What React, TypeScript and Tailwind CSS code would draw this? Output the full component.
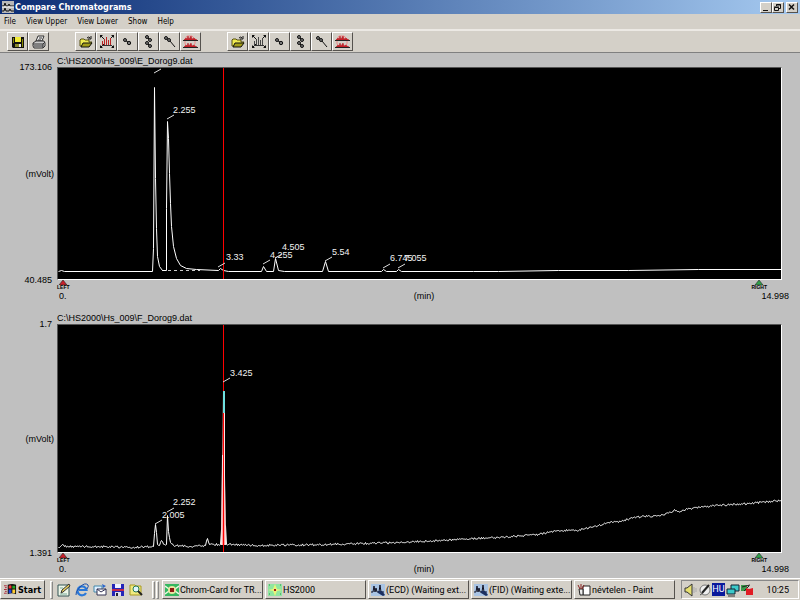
import React from 'react';

type Point = [number, number];

interface Peak {
  label?: string;
  // label anchor
  x: number;
  y: number;
  // start of the leader line
  from: Point;
}

interface ChromatogramProps {
  file: string;
  max: string;
  min: string;
  height: number;
  peaks: Peak[];
  children: React.ReactNode;
}

const RAISED =
  'border border-t-white border-l-white border-r-[#55524e] border-b-[#55524e] bg-[#d4d0c8]';
const UI_FONT = "font-['DejaVu_Sans_Condensed','DejaVu_Sans',sans-serif]";
const TASK_FONT = "font-[Roboto,'Liberation_Sans',sans-serif]";
const CHART_FONT = "font-['Liberation_Sans',Arial,sans-serif]";

const toPoints = (points: Point[]) => points.map((p) => p.join(',')).join(' ');

const upperTrace: Point[] = [
  [0, 203], [3, 202], [6, 203], [94, 203], [95, 180], [96, 19], [97, 110], [98, 160],
  [99, 188], [101, 198], [104, 202], [108, 202], [108, 140], [109, 53], [110, 70], [111, 105],
  [112, 135], [113, 158], [115, 178], [118, 190], [122, 197], [128, 200], [138, 201], [160, 202],
  [162, 200], [165, 202], [170, 203], [203, 203], [205, 198], [208, 203], [215, 203], [217, 190],
  [220, 202], [226, 203], [264, 203], [267, 193], [270, 203], [323, 203], [325, 201], [328, 203],
  [338, 203], [340, 201], [343, 203], [415, 203], [440, 203], [500, 202], [570, 202], [640, 201],
  [723, 201],
];

const lowerBase: Point[] = [
  [0, 222], [2, 221], [4, 219], [6, 221], [40, 221], [70, 222], [95, 221], [96, 208], [97, 199],
  [98, 207], [99, 219], [101, 220], [103, 215], [106, 219], [108, 219], [109, 190], [110, 206],
  [112, 217], [115, 220], [132, 221], [147, 220], [149, 213], [151, 219], [162, 219], [163, 204],
];

const lowerTail: Point[] = [
  [167, 200], [168, 219], [174, 219], [200, 220], [270, 219], [340, 217], [400, 214], [440, 212],
  [480, 209], [500, 205], [518, 205], [540, 200], [553, 196], [562, 196], [575, 192], [600, 190],
  [613, 187], [616, 184], [620, 186], [632, 183], [660, 180], [690, 178], [723, 175],
];

// Adds a small detector noise between the given points
const withNoise = (points: Point[], amplitude: number): Point[] => {
  let seed = 17;
  const rand = () => {
    seed = (seed * 1103515245 + 12345) % 2147483648;
    return seed / 2147483648 - 0.5;
  };
  const out: Point[] = [];
  for (let i = 0; i < points.length - 1; i++) {
    const [x0, y0] = points[i];
    const [x1, y1] = points[i + 1];
    out.push(points[i]);
    for (let x = x0 + 1; x < x1; x++) {
      const y = y0 + ((y1 - y0) * (x - x0)) / (x1 - x0);
      out.push([x, Math.round((y + rand() * amplitude) * 10) / 10]);
    }
  }
  out.push(points[points.length - 1]);
  return out;
};

const upperPeaks: Peak[] = [
  { x: 103, y: 6, from: [96, 5] },
  { label: '2.255', x: 115, y: 45, from: [109, 51] },
  { label: '3.33', x: 168, y: 192, from: [160, 199] },
  { label: '4.255', x: 212, y: 190, from: [205, 196] },
  { label: '4.505', x: 224, y: 182, from: [217, 190] },
  { label: '5.54', x: 274, y: 187, from: [267, 193] },
  { label: '6.745', x: 332, y: 193, from: [325, 200] },
  { label: '7.055', x: 346, y: 193, from: [340, 200] },
];

const lowerPeaks: Peak[] = [
  { label: '2.005', x: 104, y: 193, from: [97, 199] },
  { label: '2.252', x: 115, y: 180, from: [109, 187] },
  { label: '3.425', x: 172, y: 51, from: [165, 57] },
];

/* ---------- Icons ---------- */

const SaveIcon = () => (
  <svg className="w-4 h-4" viewBox="0 0 16 16">
    <path d="M2 3h12v11H3l-1-1z" fill="#111" />
    <path d="M3 4h1v5H3zM12 5h1v8h-1z" fill="#8a8a00" />
    <path d="M5 3h6v5H5z" fill="#f2ec3a" />
    <path d="M5 10h6v3H5z" fill="#8a8a2a" />
    <path d="M9 10h2v3H9z" fill="#e8e8e8" />
  </svg>
);

const PrintIcon = () => (
  <svg className="w-4 h-4" viewBox="0 0 16 16" stroke="#333" fill="#ccc">
    <path d="M5 7l2-5h6l-2 5z" fill="#eee" />
    <path d="M8 4h3M7 6h3" />
    <path d="M2 9l3-2h8l1 2v3l-2 2H3l-1-2z" />
    <path d="M2 10h10l2-2M3 12h9M12 10v4" fill="none" />
  </svg>
);

const OpenIcon = () => (
  <svg className="w-4 h-4" viewBox="0 0 16 16">
    <path d="M2 12V6l1-1h3l1 1h4v2h3l-3 4z" fill="#f0ea50" stroke="#554f10" />
    <path d="M3 13l2-4h9l-3 4z" fill="#a39c18" stroke="#111" />
    <path d="M9 4q2-2 3 0M13 2v3h-3" fill="none" stroke="#111" />
  </svg>
);

const FullScaleIcon = ({ color }: { color: string }) => (
  <svg className="w-4 h-4" viewBox="0 0 16 16" fill="none">
    <path d="M1 1h3L1 4zM15 1h-3l3 3zM1 14h3l-3-3zM15 14h-3l3-3z" fill="#111" />
    <path d="M2 2l3 3M14 2l-3 3M2 13l3-3M14 13l-3-3" stroke="#111" />
    <path d="M3.500 11V7M5.500 11V5M7.500 11V3M9.500 11V6M11.500 11V4" stroke={color} />
    <path d="M3 11.500h10" stroke="#333" />
  </svg>
);

const DotsIcon = () => (
  <svg className="w-4 h-4" viewBox="0 0 16 16" stroke="#111" fill="#777">
    <circle cx="5" cy="6" r="1.500" />
    <circle cx="9" cy="9" r="1.700" />
    <path d="M6 7l2 1" />
  </svg>
);

const ManyDotsIcon = () => (
  <svg className="w-4 h-4" viewBox="0 0 16 16" stroke="#111" fill="#777">
    <circle cx="6" cy="3" r="1.500" />
    <circle cx="9" cy="6" r="1.500" />
    <circle cx="6" cy="9" r="1.500" />
    <circle cx="9" cy="12" r="1.500" />
    <path d="M7 4l1 1M7 10l1 1" />
  </svg>
);

const ProbeIcon = () => (
  <svg className="w-4 h-4" viewBox="0 0 16 16" stroke="#111" fill="#777">
    <circle cx="4" cy="4" r="1.500" />
    <circle cx="7" cy="6" r="1.500" />
    <path d="M8 7l5 6" />
  </svg>
);

const CompareIcon = () => (
  <svg className="w-4 h-4" viewBox="0 0 16 16" fill="none">
    <path d="M4 2h5l3 3v5l-3 3H5l-3-3V5z" stroke="#e88" />
    <path d="M1 6l2-2 1 1 1-3 1 3 2-3 1 3 2-1 1 1 2 1zM1 13l2-2 1 1 1-3 1 3 2-3 1 3 2-1 1 1 2 1z" fill="#c8202a" stroke="#b01c22" strokeWidth="0.500" />
    <path d="M0 6.500h15M0 13.500h15" stroke="#222" />
  </svg>
);

const AppIcon = () => (
  <svg className="w-3 h-3 shrink-0" viewBox="0 0 12 12">
    <path d="M0 0h12v12H0z" fill="#b8b8b8" />
    <path d="M0 5h2l1-3 1 3h2l1-2 1 2h4M0 10h2l1-3 1 3h3l1-2 1 2h3" stroke="#111" fill="none" />
    <path d="M0 6h12" stroke="#fff" />
  </svg>
);

const WindowsIcon = () => (
  <svg className="w-[13px] h-[13px] shrink-0" viewBox="0 0 14 14">
    <path d="M4 2q5-2 9 0v10q-5-2-9 0z" fill="#111" />
    <path d="M5 3q2-1 3 0v3H5z" fill="#e33" />
    <path d="M9 3h3v3H9z" fill="#2a2" />
    <path d="M5 7h3v4H5z" fill="#24d" />
    <path d="M9 7h3v4H9z" fill="#fc3" />
    <path d="M0 3h3M1 5h2M0 7h3M1 9h2M0 11h3" stroke="#a23" />
  </svg>
);

const DesktopIcon = () => (
  <svg className="w-[14px] h-[14px]" viewBox="0 0 14 14">
    <path d="M1 2h11v11H1z" fill="#eef6e8" stroke="#355" />
    <path d="M3 5h3M3 11h7" stroke="#7a9" />
    <path d="M4 10l1-3 7-6 1 2-7 6z" fill="#e8d060" stroke="#333" />
  </svg>
);

const ExplorerIcon = () => (
  <svg className="w-[14px] h-[14px]" viewBox="0 0 14 14" fill="none">
    <path d="M11 10a4.500 4.500 0 1 1 .5-3H4" stroke="#2a78d8" strokeWidth="2.200" />
    <path d="M1 12Q0 9 5 4t8-2q1 1-1 4" stroke="#1c4fa8" />
  </svg>
);

const MailIcon = () => (
  <svg className="w-[14px] h-[14px]" viewBox="0 0 14 14">
    <path d="M1 3h8v6H1z" fill="#dff0ff" stroke="#48a" />
    <path d="M4 6h9v6H4z" fill="#fff" stroke="#335" />
    <path d="M4 6l4 3 5-3" fill="none" stroke="#335" />
    <path d="M9 1l4 2-3 2z" fill="#2a66cc" />
  </svg>
);

const DiskIcon = () => (
  <svg className="w-[14px] h-[14px]" viewBox="0 0 14 14">
    <path d="M1 1h12v12H1z" fill="#2424b8" />
    <path d="M4 1h6v4H4z" fill="#f0f0ff" />
    <path d="M1 6h12v2H1z" fill="#c22a4a" />
    <path d="M4 9h6v4H4z" fill="#dde" />
    <path d="M5 10h2v3H5z" fill="#223" />
  </svg>
);

const SearchIcon = () => (
  <svg className="w-[14px] h-[14px]" viewBox="0 0 14 14">
    <path d="M1 2h5l1 1h5v9H1z" fill="#f0ea80" stroke="#a99a20" />
    <circle cx="7" cy="6" r="3" fill="#dff6ff" stroke="#277a55" />
    <path d="M9 8l4 4" stroke="#222" strokeWidth="2" />
  </svg>
);

const ChromIcon = () => (
  <svg className="w-[14px] h-3 shrink-0" viewBox="0 0 14 12">
    <path d="M0 0h14v12H0z" fill="#35b860" />
    <path d="M0 2l4 3M14 2l-4 3M0 10l4-3M14 10l-4-3" stroke="#e8f8e0" strokeWidth="1.500" />
    <circle cx="7" cy="6" r="4" fill="#e9e3a0" />
    <path d="M5 4h4v4H5z" fill="#8c1a12" />
  </svg>
);

const HsIcon = () => (
  <svg className="w-[14px] h-3 shrink-0" viewBox="0 0 14 12">
    <path d="M0 0h14v12H0z" fill="#8fe6a0" />
    <path d="M7 0l2 5 5 1-5 1-2 5-2-5-5-1 5-1z" fill="#e8f47a" />
    <path d="M6 5h2v2H6z" fill="#a01818" />
    <path d="M1 1h1M12 1h1M1 10h1M12 10h1" stroke="#2a8a50" />
  </svg>
);

const DetectorIcon = () => (
  <svg className="w-[14px] h-3 shrink-0" viewBox="0 0 14 12">
    <path d="M0 0h14v12H0z" fill="#a9c4e4" />
    <path d="M0 8h2l1-6 1 6 1-4 1 4h2l1-7 1 7h3" fill="none" stroke="#112" />
    <path d="M7 7h4l3 4-2 1-5-3z" fill="#1b2f60" />
  </svg>
);

const PaintIcon = () => (
  <svg className="w-[14px] h-3 shrink-0" viewBox="0 0 14 12">
    <path d="M6 2h7v9H6z" fill="#fff" stroke="#222" />
    <path d="M2 5h4v6H3z" fill="#eee" stroke="#222" />
    <path d="M1 1l2 4M4 0v5M7 1L5 5" stroke="#822" fill="none" />
  </svg>
);

const MarkerIcon = ({ color }: { color: string }) => (
  <svg className="w-[10px] h-[5px] block" viewBox="0 0 10 5">
    <path d="M5 0l4 5H1z" fill={color} stroke="#222" strokeWidth="0.600" />
  </svg>
);

/* ---------- Chart ---------- */

const Chromatogram: React.FC<ChromatogramProps> = ({ file, max, min, height, peaks, children }) => (
  <section className={`grid grid-cols-[57px_1fr_18px] text-[9px] leading-[11px] text-black ${CHART_FONT}`}>
    <h2 className="col-start-2 h-[12px] leading-[12px] whitespace-nowrap">{file}</h2>

    <div className="col-start-1 -mt-[5px] -mb-[6px] pr-[5px] flex flex-col justify-between text-right">
      <span>{max}</span>
      <span className="-mr-[2px]">(mVolt)</span>
      <span>{min}</span>
    </div>
    <div className="col-start-2 bg-black border border-t-[#555] border-l-[#555] border-r-white border-b-white">
      <svg className="block w-full h-auto" viewBox={`0 0 723 ${height}`} fill="none">
        {children}
        {peaks.map((peak) => (
          <g key={peak.x}>
            <line x1={peak.from[0]} y1={peak.from[1]} x2={peak.from[0] + 7} y2={peak.from[1] - 4} stroke="#ddd" />
            {peak.label && (
              <text x={peak.x} y={peak.y} fill="#f2f2f2" fontSize="9">
                {peak.label}
              </text>
            )}
          </g>
        ))}
      </svg>
    </div>

    {/* Axis footer */}
    <div className="col-start-2 col-span-2 pr-[11px]">
      <div className="flex justify-between pr-[22px] h-[11px] text-[5px] leading-[5px] font-bold">
        <div className="flex flex-col items-center">
          <MarkerIcon color="#c8202c" />
          LEFT
        </div>
        <div className="flex flex-col items-center">
          <MarkerIcon color="#2fa04a" />
          RIGHT
        </div>
      </div>
      <div className="grid grid-cols-[1fr_auto_1fr] pl-[2px]">
        <span>0.</span>
        <span>(min)</span>
        <span className="text-right">14.998</span>
      </div>
    </div>
  </section>
);

/* ---------- Window chrome ---------- */

const ToolButton: React.FC<{ label: string; children: React.ReactNode }> = ({ label, children }) => (
  <button aria-label={label} className={`w-[21px] h-[19px] flex items-center justify-center ${RAISED}`}>
    {children}
  </button>
);

const ViewTools: React.FC<{ view: string; color: string }> = ({ view, color }) => (
  <div className="flex">
    <ToolButton label={`Open ${view}`}><OpenIcon /></ToolButton>
    <ToolButton label={`Full scale ${view}`}><FullScaleIcon color={color} /></ToolButton>
    <ToolButton label={`Peak ${view}`}><DotsIcon /></ToolButton>
    <ToolButton label={`Peaks ${view}`}><ManyDotsIcon /></ToolButton>
    <ToolButton label={`Probe ${view}`}><ProbeIcon /></ToolButton>
    <ToolButton label={`Compare ${view}`}><CompareIcon /></ToolButton>
  </div>
);

const tasks = [
  { title: 'Chrom-Card for TR...', icon: <ChromIcon /> },
  { title: 'HS2000', icon: <HsIcon /> },
  { title: '(ECD) (Waiting ext...', icon: <DetectorIcon /> },
  { title: '(FID) (Waiting exte...', icon: <DetectorIcon /> },
  { title: 'névtelen - Paint', icon: <PaintIcon /> },
];

const Divider = () => <div className="w-[3px] h-[18px] border border-t-white border-l-white border-r-[#888] border-b-[#888]" />;

const Taskbar = () => (
  <footer className="flex items-center h-[22px] pr-px bg-[#d4d0c8] border-t border-white text-[9px] leading-[12px]">
    <button className={`flex items-center gap-px w-[45px] h-[19px] pl-[3px] font-bold ${RAISED}`}>
      <WindowsIcon />
      Start
    </button>
    <div className="flex items-center gap-1 ml-[5px]">
      <Divider />
      <div className="flex gap-1">
        <button aria-label="Show desktop"><DesktopIcon /></button>
        <button aria-label="Internet Explorer"><ExplorerIcon /></button>
        <button aria-label="Mail"><MailIcon /></button>
        <button aria-label="Save"><DiskIcon /></button>
        <button aria-label="Search"><SearchIcon /></button>
      </div>
    </div>
    <div className="flex gap-px ml-[9px]">
      <Divider />
      <Divider />
    </div>
    <div className={`flex flex-1 min-w-0 gap-[2px] ml-[3px] mr-[6px] ${TASK_FONT}`}>
      {tasks.map((task) => (
        <button
          key={task.title}
          className={`flex flex-1 min-w-0 items-center gap-px h-[19px] pl-[2px] overflow-hidden whitespace-nowrap ${RAISED}`}
        >
          {task.icon}
          {task.title}
        </button>
      ))}
    </div>
    <div className={`flex items-center w-[118px] h-[19px] pl-[2px] pr-[9px] border border-t-[#888] border-l-[#888] border-r-white border-b-white ${TASK_FONT}`}>
      <svg className="w-[14px] h-[14px]" viewBox="0 0 14 14">
        <path d="M1 5h2l5-4v12L3 9H1z" fill="#e6e070" stroke="#333" />
        <path d="M10 4v6M12 5v4" stroke="#aaa" />
      </svg>
      <svg className="w-[14px] h-[14px]" viewBox="0 0 14 14">
        <circle cx="7" cy="7" r="5" fill="#eee" stroke="#777" />
        <path d="M4 10l7-8" stroke="#222" strokeWidth="2" />
        <path d="M2 12l3-2" stroke="#555" />
      </svg>
      <span className="w-[13px] h-[13px] bg-[#0a1a9c] text-white text-center leading-[13px]">HU</span>
      <svg className="w-[14px] h-[14px] ml-px" viewBox="0 0 14 14">
        <path d="M5 2h8v6H5z" fill="#3ccaca" stroke="#123" />
        <path d="M1 6h8v5H1z" fill="#3ccaca" stroke="#123" />
        <path d="M2 13h7" stroke="#333" />
      </svg>
      <svg className="w-[14px] h-[14px]" viewBox="0 0 14 14">
        <path d="M1 2h6v6H1z" fill="#3b9a4a" />
        <path d="M2 4l8-2M4 8l5-5" stroke="#222" />
        <path d="M6 5l3 1 4-1v7H6z" fill="#e01c24" />
      </svg>
      <span className="ml-auto">10:25</span>
    </div>
  </footer>
);

const App: React.FC = () => {
  return (
    <div className={`min-h-screen flex flex-col bg-[#c0c0c0] text-black ${UI_FONT}`}>
      {/* Title bar */}
      <header className="flex items-center h-[14px] px-[2px] bg-linear-to-r from-[#0c2c74] to-[#a6caf0] text-white">
        <AppIcon />
        <h1 className="ml-px text-[9px] leading-[12px] font-bold">Compare Chromatograms</h1>
        <div className="ml-auto flex">
          <button aria-label="Minimize" className={`w-3 h-[11px] ${RAISED}`}>
            <svg viewBox="0 0 10 9" className="block"><path d="M2 7.500h5" stroke="#111" /></svg>
          </button>
          <button aria-label="Restore" className={`w-3 h-[11px] ${RAISED}`}>
            <svg viewBox="0 0 10 9" className="block">
              <path d="M3.500 3V1.500h4v4H6M1.500 4.500h4v3h-4zM3 2h5M1 4h5" stroke="#111" fill="none" />
            </svg>
          </button>
          <button aria-label="Close" className={`w-3 h-[11px] ml-[2px] ${RAISED}`}>
            <svg viewBox="0 0 10 9" className="block"><path d="M2 1.500l5 5M7 1.500l-5 5" stroke="#111" strokeWidth="1.500" /></svg>
          </button>
        </div>
      </header>

      {/* Menu */}
      <nav className="flex items-center gap-[10px] h-[15px] px-1 bg-[#d4d0c8] text-[8px] leading-[12px]">
        <button>File</button>
        <button>View Upper</button>
        <button>View Lower</button>
        <button>Show</button>
        <button>Help</button>
      </nav>

      {/* Toolbar */}
      <div className="flex items-center gap-[26px] h-[24px] pl-[7px] bg-[#d4d0c8] border-t-2 border-t-[#ece9e4] border-b border-b-[#808080]">
        <div className="flex">
          <ToolButton label="Save"><SaveIcon /></ToolButton>
          <ToolButton label="Print"><PrintIcon /></ToolButton>
        </div>
        <ViewTools view="upper" color="#b22" />
        <ViewTools view="lower" color="#444" />
      </div>

      <main className="flex-1 flex flex-col gap-[10px] pt-[2px]">
        <Chromatogram
          file="C:\HS2000\Hs_009\E_Dorog9.dat"
          max="173.106"
          min="40.485"
          height={211}
          peaks={upperPeaks}
        >
          <path d="M104 202.500H142" stroke="#ccc" strokeDasharray="3 3" />
          <g transform="translate(0.5 0.5)">
            <polyline points={toPoints(upperTrace)} stroke="#fff" />
          </g>
          <rect x="165" y="0" width="1" height="211" fill="#f00" />
        </Chromatogram>

        <Chromatogram
          file="C:\HS2000\Hs_009\F_Dorog9.dat"
          max="1.7"
          min="1.391"
          height={227}
          peaks={lowerPeaks}
        >
          <g transform="translate(0.5 0.5)" stroke="#fff">
            <polyline points={toPoints(withNoise(lowerBase, 2))} />
            <polyline points={toPoints(withNoise(lowerTail, 2))} />
          </g>
          {/* Selected peak */}
          <path d="M165 66l-1 80-1 74h5l-1-60-1-94z" fill="#ff9a9a" />
          <path d="M166.500 66v84l1 70M164.500 130l-1 90" stroke="#fbe4e4" />
          <rect x="165" y="0" width="1" height="227" fill="#f00" />
          <rect x="165" y="66" width="2" height="22" fill="#6fe0e0" />
        </Chromatogram>
      </main>

      <Taskbar />
    </div>
  );
};

export default App;
